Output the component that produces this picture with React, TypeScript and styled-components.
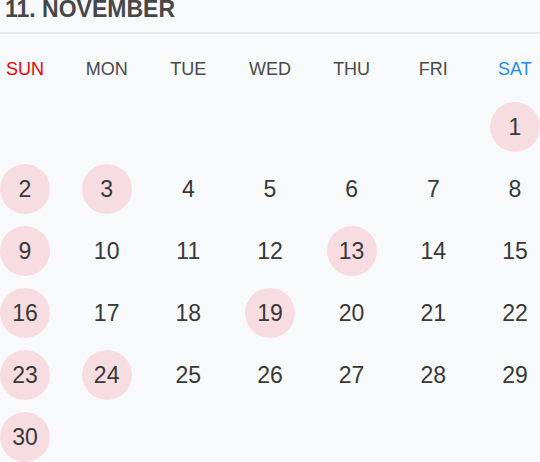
import React from "react";
import styled, { createGlobalStyle } from "styled-components";

const Global = createGlobalStyle`
  html, body {
    margin: 0;
    padding: 0;
    background: #f8f9fb;
    font-family: "Liberation Sans", Arial, sans-serif;
  }
`;

const Page = styled.div`
  width: 540px;
  background: #f8f9fb;
`;

const Header = styled.div`
  padding: 0 0 13px 5px;
  border-bottom: 2px solid #e7e9ec;
`;

const Title = styled.h1`
  margin: 0;
  font-size: 23px;
  line-height: 19px;
  font-weight: 700;
  color: #474747;
`;

const WeekRow = styled.div`
  display: flex;
  justify-content: space-between;
  margin-top: 25px;
  margin-bottom: 23px;
`;

const WeekLabel = styled.div<{ $tone: "sun" | "sat" | "normal" }>`
  width: 50px;
  text-align: center;
  font-size: 18px;
  line-height: 20px;
  color: ${(p) => (p.$tone === "sun" ? "#ef0000" : p.$tone === "sat" ? "#1e8cf0" : "#4a4a4a")};
`;

const Grid = styled.div`
  display: flex;
  flex-direction: column;
  gap: 12px;
`;

const Week = styled.div`
  display: flex;
  justify-content: space-between;
`;

const Day = styled.div<{ $marked?: boolean }>`
  width: 50px;
  height: 50px;
  border-radius: 50%;
  text-align: center;
  font-size: 23px;
  line-height: 50px;
  color: #383838;
  background: ${(p) => (p.$marked ? "#f7dde2" : "transparent")};
`;

const labels = ["SUN", "MON", "TUE", "WED", "THU", "FRI", "SAT"];
const marked = new Set([1, 2, 3, 9, 13, 16, 19, 23, 24, 30]);

const cells: (number | null)[] = [...Array(6).fill(null), ...Array.from({ length: 30 }, (_, i) => i + 1)];
while (cells.length % 7) cells.push(null);
const weeks: (number | null)[][] = [];
for (let i = 0; i < cells.length; i += 7) weeks.push(cells.slice(i, i + 7));

export default function App() {
  return (
    <Page>
      <Global />
      <Header>
        <Title>11. NOVEMBER</Title>
      </Header>
      <WeekRow>
        {labels.map((l, i) => (
          <WeekLabel key={l} $tone={i === 0 ? "sun" : i === 6 ? "sat" : "normal"}>
            {l}
          </WeekLabel>
        ))}
      </WeekRow>
      <Grid>
        {weeks.map((w, wi) => (
          <Week key={wi}>
            {w.map((d, di) => (
              <Day key={di} $marked={d !== null && marked.has(d)}>
                {d ?? ""}
              </Day>
            ))}
          </Week>
        ))}
      </Grid>
    </Page>
  );
}
